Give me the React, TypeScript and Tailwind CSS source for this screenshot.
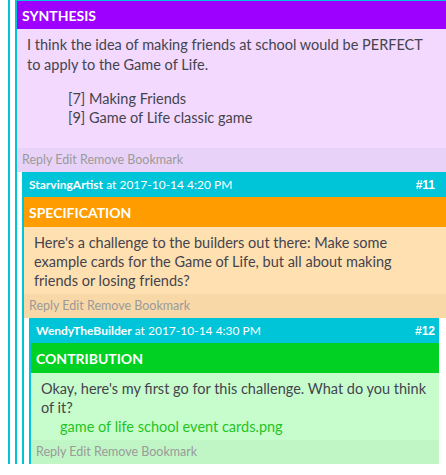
const font = "font-['Lato','Noto_Sans',sans-serif]";

type Tone = {
  bar: string;
  body: string;
  actions: string;
};

const tones: Record<string, Tone> = {
  synthesis: { bar: "bg-[#9d00ff]", body: "bg-[#f2d9fd]", actions: "bg-[#e9d2f7]" },
  specification: { bar: "bg-[#ff9d00]", body: "bg-[#ffe0b0]", actions: "bg-[#f9d8a8]" },
  contribution: { bar: "bg-[#00d122]", body: "bg-[#c7fdcc]", actions: "bg-[#c0f6c5]" },
};

const Actions = ({ className }: { className: string }) => (
  <div className={`h-[24px] flex items-center px-[5px] text-[12.5px] text-[#9a9a9a] ${className}`}>
    Reply Edit Remove Bookmark
  </div>
);

const Header = ({ user, when, id, pr }: { user: string; when: string; id: string; pr: string }) => (
  <div className={`h-[25px] bg-[#00c4d7] flex items-center justify-between pl-[5px] ${pr} text-[12px] text-white`}>
    <span>
      <b>{user}</b> at {when}
    </span>
    <b className="font-['Liberation_Sans',sans-serif] text-[12px]">{id}</b>
  </div>
);

const App = () => {
  return (
    <div className={`w-[446px] h-[475px] overflow-hidden bg-white ${font}`}>
      <div className="w-[470px] ml-[8px] border-l-2 border-[#00c4d7] pl-[5px]">
        <div className="border-l-2 border-[#00c4d7]">
          <div className="h-[1px] bg-[#00c4d7]" />
          <div className={`h-[28px] ${tones.synthesis.bar} flex items-center px-[5px] text-[14px] font-bold text-white`}>
            SYNTHESIS
          </div>
          <div className={`${tones.synthesis.body} pt-[6px] pb-[21px] pl-[10px] text-[14.5px] leading-[20px] text-[#44444f]`}>
            <p className="w-[410px]">
              I think the idea of making friends at school would be PERFECT to apply to the Game of Life.
            </p>
            <div className="mt-[14px] pl-[41px] leading-[19px]">
              <div>[7] Making Friends</div>
              <div>[9] Game of Life classic game</div>
            </div>
          </div>
          <Actions className={tones.synthesis.actions} />

          <div className="pl-[5px]">
            <div className="border-l-2 border-[#00c4d7]">
              <Header user="StarvingArtist" when="2017-10-14 4:20 PM" id="#11" pr="pr-[43px]" />
              <div className={`h-[30px] ${tones.specification.bar} flex items-center px-[5px] text-[14px] font-bold text-white`}>
                SPECIFICATION
              </div>
              <div className={`${tones.specification.body} pt-[6px] pb-[4px] pl-[10px] text-[14.5px] leading-[19px] text-[#44444f]`}>
                <p className="w-[400px]">
                  Here's a challenge to the builders out there: Make some example cards for the Game of Life, but all about making friends or losing friends?
                </p>
              </div>
              <Actions className={tones.specification.actions} />

              <div className="pl-[5px]">
                <div className="w-[410px] border-l-2 border-[#00c4d7]">
                  <Header user="WendyTheBuilder" when="2017-10-14 4:30 PM" id="#12" pr="pr-[4px]" />
                  <div className={`h-[30px] ${tones.contribution.bar} flex items-center px-[5px] text-[14px] font-bold text-white`}>
                    CONTRIBUTION
                  </div>
                  <div className={`${tones.contribution.body} pt-[6px] pb-[4px] pl-[10px] pr-[4px] text-[14.5px] leading-[19px] text-[#44444f]`}>
                    <div className="whitespace-nowrap">Okay, here's my first go for this challenge. What do you think</div>
                    <div>of it?</div>
                    <div className="pl-[19px] text-[#1fc41f]">game of life school event cards.png</div>
                  </div>
                  <Actions className={tones.contribution.actions} />
                </div>
              </div>
            </div>
          </div>
        </div>
      </div>
    </div>
  );
};

export default App;
